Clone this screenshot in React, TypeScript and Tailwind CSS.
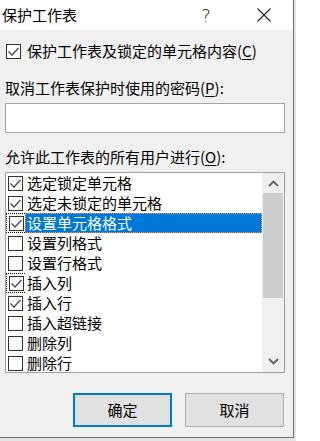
import React from "react";

const items: { label: string; checked: boolean; selected?: boolean; focus?: boolean }[] = [
  { label: "选定锁定单元格", checked: true },
  { label: "选定未锁定的单元格", checked: true },
  { label: "设置单元格格式", checked: true, selected: true },
  { label: "设置列格式", checked: false },
  { label: "设置行格式", checked: false },
  { label: "插入列", checked: true, focus: true },
  { label: "插入行", checked: true },
  { label: "插入超链接", checked: false },
  { label: "删除列", checked: false },
  { label: "删除行", checked: false },
];

function Box({ checked }: { checked: boolean }) {
  return (
    <div className="w-[15px] h-[15px] border border-[#333333] bg-white flex items-center justify-center shrink-0">
      {checked && (
        <svg width="13" height="13" viewBox="0 0 13 13">
          <polyline points="1.5,6.5 5,10 11.5,3" fill="none" stroke="#4a4a4a" strokeWidth="1.3" />
        </svg>
      )}
    </div>
  );
}

export default function App() {
  return (
    <div
      className="w-[296px] h-[441px] bg-[#e4e4e4] overflow-hidden text-black"
      style={{ fontFamily: '"Noto Sans CJK SC", "Noto Sans", sans-serif' }}
    >
      <div className="w-[294px] h-[438px] bg-[#f0f0f0] border-r border-b border-[#707070] flex flex-col">
        {/* title bar */}
        <div className="h-[30px] bg-white flex items-center shrink-0">
          <div className="flex-1 pl-[2px] text-[15px] leading-[20px]">保护工作表</div>
          <div className="w-[58px] h-[30px] flex items-center justify-center text-[18px] text-[#222]" style={{ fontFamily: '"DejaVu Sans", sans-serif', fontWeight: 300 }}>
            ?
          </div>
          <div className="w-[58px] h-[30px] flex items-center justify-center">
            <svg width="14" height="14" viewBox="0 0 14 14">
              <path d="M0.5 0.5 L13.5 13.5 M13.5 0.5 L0.5 13.5" stroke="#222" strokeWidth="1.1" fill="none" />
            </svg>
          </div>
        </div>

        <div className="pl-[5px] pr-[8px] flex flex-col">
          {/* protect checkbox */}
          <div className="mt-[11px] h-[20px] flex items-center pl-[1px]">
            <Box checked />
            <span className="ml-[6px] text-[15px] leading-[20px]">
              保护工作表及锁定的单元格内容(<span className="underline underline-offset-2">C</span>)
            </span>
          </div>

          <div className="mt-[17px] text-[15px] leading-[20px]">
            取消工作表保护时使用的密码(<span className="underline underline-offset-2">P</span>):
          </div>
          <div className="mt-[5px] h-[30px] bg-white border border-[#a5a5a5]" />

          <div className="mt-[14px] text-[15px] leading-[20px]">
            允许此工作表的所有用户进行(<span className="underline underline-offset-2">O</span>):
          </div>

          {/* list box */}
          <div className="mt-[5px] h-[201px] border border-[#a0a0a0] bg-white flex overflow-hidden">
            <div className="flex-1 flex flex-col">
              {items.map((it) => (
                <div key={it.label} className="h-[20px] flex shrink-0">
                  <div
                    className={
                      "w-[19px] h-[20px] flex items-center justify-center " +
                      (it.selected || it.focus ? "border border-dotted border-black border-r-0" : "")
                    }
                  >
                    <Box checked={it.checked} />
                  </div>
                  <div
                    className={
                      "flex-1 h-[20px] pl-[1px] text-[15px] leading-[18px] flex items-center " +
                      (it.selected ? "bg-[#0078d7] text-white border border-dotted border-[#ff9a3a]" : "")
                    }
                  >
                    <span className={it.selected ? "" : "pl-[1px]"}>{it.label}</span>
                  </div>
                </div>
              ))}
            </div>
            {/* scrollbar */}
            <div className="w-[22px] bg-[#f0f0f0] flex flex-col shrink-0">
              <div className="h-[20px] flex items-center justify-center">
                <svg width="11" height="7" viewBox="0 0 11 7">
                  <polyline points="1,6 5.5,1.5 10,6" fill="none" stroke="#606060" strokeWidth="1.8" />
                </svg>
              </div>
              <div className="h-[105px] mx-[1px] bg-[#cdcdcd]" />
              <div className="flex-1" />
              <div className="h-[22px] flex items-center justify-center">
                <svg width="11" height="7" viewBox="0 0 11 7">
                  <polyline points="1,1 5.5,5.5 10,1" fill="none" stroke="#606060" strokeWidth="1.8" />
                </svg>
              </div>
            </div>
          </div>

          {/* buttons */}
          <div className="mt-[20px] flex justify-end gap-[13px] pr-[1px]">
            <div className="w-[99px] h-[34px] bg-[#e1e1e1] border-2 border-[#0078d7] flex items-center justify-center text-[15px]">
              确定
            </div>
            <div className="w-[99px] h-[34px] bg-[#e1e1e1] border border-[#adadad] flex items-center justify-center text-[15px]">
              取消
            </div>
          </div>
        </div>
      </div>
    </div>
  );
}
